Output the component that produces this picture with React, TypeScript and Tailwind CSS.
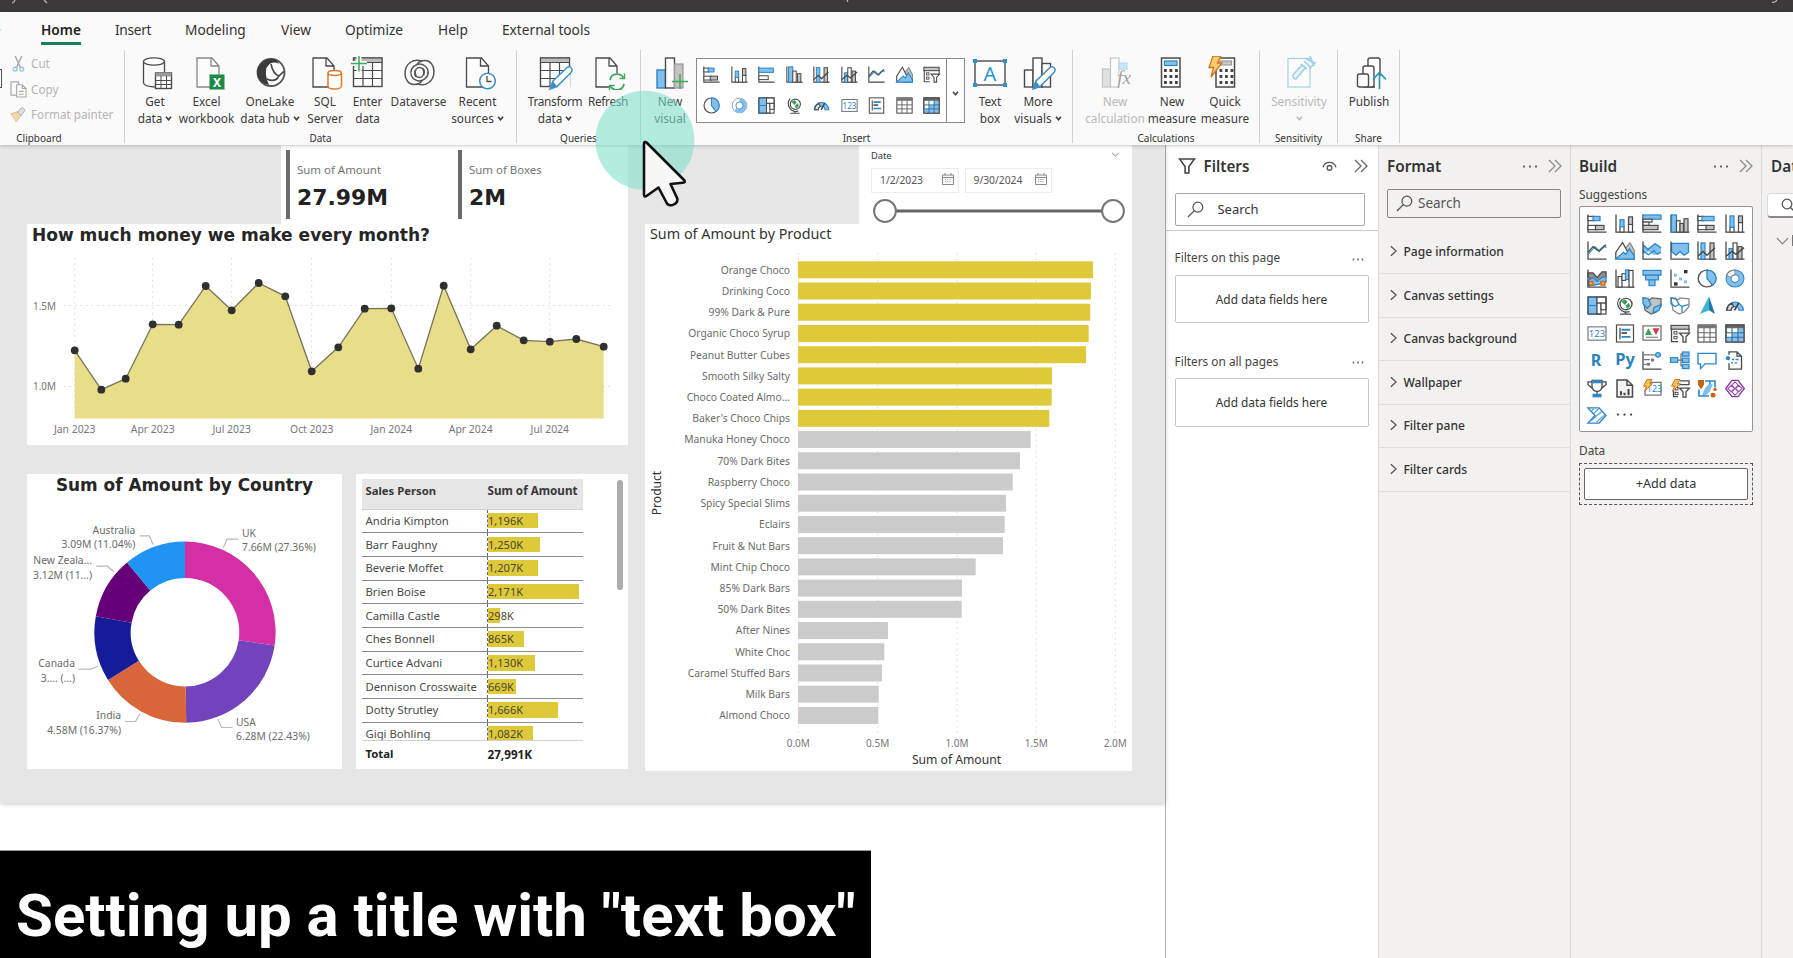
import React from "react";

const D = "#4a4a4a";
const B = "#83bfec";
const BS = "#2b86c8";
const G = "#c3c3c3";
const UI = "'Noto Sans', 'Open Sans', sans-serif";

type Kids = { children?: React.ReactNode };

/* ---------- small 20x20 visual glyphs ---------- */

const R = ({ x, y, w, h, f = "#fff", s = D, k = 1.2 }: { x: number; y: number; w: number; h: number; f?: string; s?: string; k?: number }) => (
  <rect x={x} y={y} width={w} height={h} fill={f} stroke={s} strokeWidth={k} />
);
const P = ({ d, s = D, f = "none", k = 1.3 }: { d: string; s?: string; f?: string; k?: number }) => (
  <path d={d} stroke={s} fill={f} strokeWidth={k} />
);
const Axes = () => <P d="M1 .5V19H19.5" />;
const Bolt = () => <P d="M5 .5H10L7.5 5H10.5L2.5 13L4.5 7.5H1.5Z" s="#c8641a" f="#f5c35a" k={0.9} />;
const FunnelMini = () => <P d="M9.5 9.5H19.5L16 13.5V19H13V13.5Z" f="#fff" />;

const glyphs: Record<string, React.ReactNode> = {
  stackedBar: (<><Axes /><R x={1} y={2.5} w={6} h={4.5} /><R x={6} y={2.5} w={7} h={4.5} f={B} s={BS} /><R x={1} y={12} w={9} h={4.5} /><R x={8.5} y={12} w={8.5} h={4.5} f={G} /></>),
  stackedCol: (<><Axes /><R x={5} y={13} w={4} h={6} /><R x={5} y={6} w={4} h={7.5} f={B} s={BS} /><R x={13.5} y={11} w={4} h={8} /><R x={13.5} y={3} w={4} h={8} f={G} /></>),
  clusteredBar: (<><Axes /><R x={1} y={2.5} w={17} h={5} f={B} s={BS} /><R x={1} y={11.5} w={11} h={4.5} /></>),
  clusteredCol: (<><Axes /><R x={3} y={1} w={5} h={18} f={B} s={BS} /><R x={8} y={6} w={4} h={13} /><R x={13.5} y={9} w={4} h={10} f={G} /></>),
  clusteredBar2: (<><Axes /><R x={1} y={1} w={18} h={4.5} f={B} s={BS} /><R x={1} y={5.5} w={9} h={3} /><R x={1} y={8.5} w={6} h={3.5} /><R x={1} y={12} w={15} h={4.5} f={G} /></>),
  clusteredCol2: (<><Axes /><R x={1.5} y={1} w={5} h={18} f={B} s={BS} /><R x={6.5} y={7} w={3.5} h={12} /><R x={10} y={10} w={3.5} h={9} f={G} /><R x={14} y={5} w={4} h={14} f={G} /></>),
  bar100: (<><Axes /><R x={1} y={2.5} w={6} h={4.5} /><R x={5} y={2.5} w={12} h={4.5} f={B} s={BS} /><R x={1} y={12} w={9} h={4.5} /><R x={9} y={12} w={8} h={4.5} f={G} /></>),
  col100: (<><Axes /><R x={5} y={14} w={4} h={5} /><R x={5} y={2} w={4} h={12} f={B} s={BS} /><R x={13.5} y={9} w={4} h={10} /><R x={13.5} y={2} w={4} h={7} f={G} /></>),
  comboStack: (<><Axes /><R x={4} y={2} w={4} h={17} f={B} s={BS} /><R x={13} y={2} w={4} h={17} f={G} /><P d="M1 16L6 11L10 15L18 7" k={1.5} /></>),
  comboClust: (<><Axes /><R x={4} y={8} w={4} h={11} f={B} s={BS} /><R x={8} y={2} w={4} h={17} /><R x={13} y={6} w={4} h={13} f={G} /><P d="M1 16L7 11L11 14L19 7" k={1.5} /></>),
  line: (<><Axes /><P d="M1 14L8 6L12 10L17 5L19.5 7" s="#3aa0c8" /><P d="M1 12L6 6L12 11L19 4" /></>),
  area: (<><P d="M10 8L15 2L19.3 10V19H10Z" f={G} s="#8a8a8a" /><P d="M.8 18V12L7.500 1.500L14 14V19Z" f="#fff" s={D} /><P d="M.8 19L8.500 12L11 14L14.500 8L19.300 16V19Z" f={B} s={BS} /></>),
  stackedArea: (<><P d="M1 3L6 8L13 2L19 6V12L12 15L7 11L1 14Z" f={B} s="none" /><P d="M1 4L6 9L13 3L19 7" s={BS} /><P d="M1 10.500L6.500 14.500L12 10L15 14L19 12" s={BS} /><Axes /></>),
  area100: (<><P d="M1.500 2.500H18.500V12L14 15L10 11L6 15L1.500 11Z" f={B} s={BS} /><Axes /></>),
  ribbon: (<><P d="M1 4L6 4L10 9L15 3H19V8L14 13H7L1 8Z" f="#8f8f8f" s={D} /><P d="M1 12L6 9L10 13L15 9L19 8V14L12 16L7 17L1 18Z" f={B} s={BS} /><R x={2} y={13} w={4} h={4} f="#f0a04a" s="#c8641a" /><R x={14} y={13} w={4} h={4} f="#f0a04a" s="#c8641a" /><Axes /></>),
  waterfall: (<><Axes /><R x={3} y={8} w={4} h={11} /><R x={7} y={5} w={3.5} h={7} /><R x={10.5} y={1} w={3.5} h={10} f={B} s={BS} /><R x={14} y={1.5} w={4} h={17.5} /></>),
  funnel: (<><R x={1} y={1.5} w={18} h={5} f={B} s={BS} /><R x={3.5} y={6.5} w={13} h={5} f={B} s={BS} /><R x={7} y={11.5} w={6} h={6} f={B} s={BS} /></>),
  scatter: (<><Axes /><rect x="14" y="1" width="3.5" height="3.5" fill="#333" /><rect x="4" y="5" width="3" height="3" fill={B} /><rect x="9" y="9" width="3" height="3" fill={B} /><rect x="14" y="12" width="3" height="3" fill={B} /><rect x="4" y="14" width="3.5" height="3.5" fill="#333" /></>),
  pie: (<><circle cx="10" cy="10" r="8.8" fill="#fff" stroke="#555" strokeWidth="1.4" /><P d="M10 1.2A8.8 8.8 0 0 1 15.5 17L10 10Z" f={B} s={BS} /></>),
  donut: (<><circle cx="10" cy="10" r="6.5" fill="none" stroke={BS} strokeWidth="6" /><circle cx="10" cy="10" r="6.5" fill="none" stroke={B} strokeWidth="4" /><path d="M3.700 8A6.500 6.500 0 0 1 10 3.500" fill="none" stroke="#777" strokeWidth="6" /><path d="M4 7.500A6.500 6.500 0 0 1 9.500 3.500" fill="none" stroke="#f4f4f4" strokeWidth="4" /></>),
  donutLight: (<><circle cx="10" cy="10" r="8.6" fill="#fff" stroke="#999" strokeWidth="1.1" /><path d="M10 3.5A6.5 6.5 0 1 1 5 14.5" fill="none" stroke={B} strokeWidth="4" /><circle cx="10" cy="10" r="4.2" fill="#fff" stroke={BS} strokeWidth="1" /></>),
  treemap: (<><R x={1} y={1} w={9} h={18} f={B} s={BS} /><R x={10} y={1} w={9} h={6.5} /><R x={10} y={7.5} w={4} h={11.5} /><R x={14} y={7.5} w={5} h={7} /><R x={1} y={1} w={18} h={18} f="none" /><P d="M1 10H10" s={BS} /></>),
  map: (<><circle cx="11" cy="8.5" r="6" fill="#fff" stroke="#555" strokeWidth="1.4" /><P d="M7 6L10 4L12 6L10 9Z M11 10L14 8L14.5 11L12 13Z" f="#2f9e54" s="#2f9e54" k={0.8} /><P d="M5 2A9 9 0 0 0 14.5 16.5" /><P d="M10.5 16.5V19M5 19.2H16" /></>),
  filledMap: (<><P d="M1 2L8 4L10 2L19 3V11L14 17L9 19L3 15Z" f={G} s="#666" /><P d="M1 2L6 2.5L9 9L5 13L1 8Z" f={B} s={BS} /><P d="M12 12L19 9L17 15L11 18Z" f={B} s={BS} /></>),
  shapeMap: (<><P d="M1 2L8 4L10 2L19 3V11L14 17L9 19L3 15Z" f="#fff" s="#888" /><P d="M1 2L6 2.5L9 9L5 11L1 8Z" s={BS} /><P d="M12 11L18.5 9M12 11L12 17M9 9L12 11" s={BS} /></>),
  azure: (<><path d="M12 .5L3 19L12 15Z" fill="#3fb4d4" /><path d="M12 .5L18 19L12 15Z" fill="#2577ab" /></>),
  gauge: (<><path d="M1.5 15A8.5 8.5 0 0 1 18.5 15H14A4 4 0 0 0 6 15Z" fill={B} stroke={BS} strokeWidth="1.2" /><P d="M2 15A8.5 8.5 0 0 1 7 7.5L8.5 11.3A4 4 0 0 0 6 15Z" f="#ddd" /><P d="M9.5 15L14 7" k={1.8} /></>),
  card: (<><R x={1} y={3} w={18} h={14} s="#777" /><text x="10" y="13.8" fontSize="9.5" textAnchor="middle" fill={BS} fontFamily={UI}>123</text></>),
  multiCard: (<><R x={1.5} y={1} w={17} h={18} /><path d="M5 4V16" stroke={D} strokeWidth="1.3" /><path d="M6.5 6H15M6.5 13.5H15.5" stroke={BS} strokeWidth="2" /><path d="M6.5 9.5H12" stroke="#444" strokeWidth="1.8" /></>),
  kpi: (<><R x={1} y={2} w={18} h={15} s="#666" /><path d="M3 11.500L6.500 4.500L10 11.500Z" fill="#3aa655" /><path d="M10.500 4.500H17.500L14 11.500Z" fill="#d23a4a" /><P d="M4 14H16" s="#888" /></>),
  slicer: (<><R x={1} y={1.5} w={18} h={4} f={G} /><P d="M1.5 5V18.5H8M19 5V9" /><R x={4} y={8} w={3} h={2.5} k={1} /><R x={4} y={13} w={3} h={2.5} k={1} /><FunnelMini /></>),
  table: (<><R x={1} y={1} w={18} h={18} /><rect x="1" y="1" width="18" height="3.5" fill="#777" /><P d="M7 4V19M13 4V19M1 9.3H19M1 14H19" k={1.1} s="#666" /></>),
  matrix: (<><R x={1} y={1} w={18} h={18} /><rect x="7" y="9.5" width="12" height="9" fill={B} /><rect x="13" y="4.5" width="6" height="6" fill={B} /><rect x="1" y="1" width="18" height="3.5" fill="#666" /><rect x="1" y="14" width="7" height="5" fill={B} /><P d="M7 4V19M13 4V19M1 9.3H19M1 14H19" k={1.1} s="#2f6f9f" /><R x={1} y={1} w={18} h={18} f="none" /></>),
  r: <text x="9" y="16" fontSize="16" fontWeight="700" textAnchor="middle" fill="#2b83b8" fontFamily={UI}>R</text>,
  py: <text x="10" y="15" fontSize="16.500" fontWeight="700" textAnchor="middle" fill="#2b83b8" fontFamily={UI}>Py</text>,
  keyInf: (<><Axes /><P d="M1 4H14M1 9H8M1 14H6" s="#777" /><circle cx="16" cy="4" r="2.4" fill={B} stroke={BS} strokeWidth="1.2" /><rect x="9" y="8" width="3" height="3" fill="#777" /><rect x="5" y="12.5" width="3" height="3" fill="#777" /></>),
  decomp: (<><P d="M7 9.5H11M11 3V16M11 3H13M11 9.5H13M11 16H13" s="#777" /><R x={0.6} y={7} w={7} h={5} f={B} s={BS} /><R x={12.5} y={1} w={6.5} h={4.5} f={B} s={BS} /><R x={12.5} y={7.5} w={6.5} h={4.5} f={B} s={BS} /><R x={12.5} y={14} w={6.5} h={4.5} f={B} s={BS} /></>),
  qa: <P d="M1 2.5H19V13.5H8L3.5 18.5V13.5H1Z" s={BS} f="#fff" k={1.4} />,
  narrative: (<><P d="M4 4V1H12L16.5 5.5V19H4V13M12 1V5.5H16.5" /><circle cx="3" cy="7.5" r="2.2" fill={BS} /><P d="M7 9H9M10.5 9H13.5M6 12.5H8M9.5 12.5H12" s={BS} k={1.5} /></>),
  goals: (<><P d="M5 1.5H15V8A5 5 0 0 1 5 8ZM5 3H1V6L5 9.5M15 3H19V6L15 9.5M10 13V16" f="none" /><rect x="5.5" y="1" width="9" height="3.5" fill={BS} /><rect x="5.5" y="15.5" width="9" height="3.8" fill={BS} /></>),
  paginated: (<><P d="M2 1H12L17.5 6.5V19H2ZM12 1V6.5H17.5" f="#f2f2f2" k={1.5} /><path d="M6 17V13M9.5 17V14.5M13.5 17V10.5" stroke="#444" strokeWidth="2" /></>),
  boltCard: (<><P d="M8 3.5H19V17H3V12" s="#777" /><text x="12.5" y="14" fontSize="9" textAnchor="middle" fill={BS} fontFamily={UI}>123</text><Bolt /></>),
  boltSlicer: (<><P d="M10 2H19V6H9M3.5 12V18.5H8" /><R x={5} y={9} w={3} h={2.5} k={1} /><R x={5} y={14} w={3} h={2.5} k={1} /><FunnelMini /><Bolt /></>),
  arcgis: (<><P d="M8 2H18V9M2 11V18H12M13 2V6L9 10V14L6 18" s={BS} f="none" k={1.6} /><path d="M8 10L12 5H16L13 13L9 17H5Z" fill={B} /><path d="M1 1H7V6L4 11L1 6Z" fill="#c8641a" /><circle cx="18" cy="11" r="1.7" fill="#c8641a" /><circle cx="16" cy="17" r="2.5" fill="#c8641a" /></>),
  powerApps: (<><P d="M7 1.500H13L19.300 10L13 18.500H7L.7 10Z" s="#8a3a9e" f="#fff" k={1.4} /><P d="M10 3L13.2 6.5L10 10L6.8 6.5ZM6.2 6.6L9.4 10L6.2 13.4L3 10ZM13.8 6.6L17 10L13.8 13.4L10.6 10ZM10 10L13.2 13.5L10 17L6.8 13.5Z" s="#a04ab4" k={1.1} /></>),
  automate: (<><P d="M1 2H12L19 10L12 18H1L8 10Z" s={BS} k={1.4} f="#fff" /><P d="M4.5 5.5L7 2.500M6.500 8L12 2.500M3.500 16L15 5.500M9.500 17L18 9" s="#4aa3dc" k={1.2} /></>),
  more: (<><circle cx="3" cy="9" r="1.2" fill="#444" /><circle cx="9.5" cy="9" r="1.2" fill="#444" /><circle cx="16" cy="9" r="1.2" fill="#444" /></>),
};

const Glyph = ({ name, big }: { name: string; big?: boolean }) => (
  <svg viewBox="0 0 20 20" preserveAspectRatio="none" className={big ? "h-[19px] w-[20px] overflow-visible" : "h-[17px] w-[17px] overflow-visible"}>
    {glyphs[name]}
  </svg>
);

/* ---------- ribbon icons (36 x 34) ---------- */

const Doc = ({ x = 6, s = D, w = 22 }: { x?: number; s?: string; w?: number }) => (
  <path d={`M${x} 2H${x + w - 7}L${x + w} 10V31H${x}ZM${x + w - 8} 2V10H${x + w}`} fill="#fcfcfc" stroke={s} strokeWidth="1.3" />
);
const Pencil = () => (
  <>
    <path d="M13 33L16 25L30 11.5Q33 9.500 35 13Q35.500 15 33.500 17L20 30.500Z" fill="#fff" stroke="#3a8fc9" strokeWidth="1.500" />
    <path d="M13 33L16 25L20 30.500Z" fill="#3a8fc9" />
  </>
);
const CalcKeys = ({ x }: { x: number }) => (
  <>
    {[13, 19, 25].map((y) =>
      [0, 5.5, 11].map((dx) => <rect key={`${dx}-${y}`} x={x + dx} y={y} width="2.800" height="3" fill="#444" />)
    )}
  </>
);

const big: Record<string, React.ReactNode> = {
  getData: (<><path d="M6.500 5.500V27Q7 30.500 18 31M27.500 5.500V16" fill="none" stroke={D} strokeWidth="1.300" /><ellipse cx="17" cy="5.500" rx="10.500" ry="3.600" fill="#fff" stroke={D} strokeWidth="1.300" /><R x={18.5} y={17} w={16} h={15.5} k={1.4} /><rect x="18.500" y="17" width="16" height="3.500" fill="#9a9a9a" /><P d="M24 20V32M29.500 20V32M18.500 24.500H34.500M18.500 28.500H34.500" k={1} /></>),
  excel: (<><Doc x={8} s="#888" /><rect x="20.500" y="18.500" width="15" height="15" fill="#1e8a44" /><text x="28" y="30.500" fontSize="12" fontWeight="700" textAnchor="middle" fill="#fff" fontFamily={UI}>X</text></>),
  onelake: (<><circle cx="19" cy="16.500" r="13.500" fill="#fff" stroke="#555" strokeWidth="1.800" /><path d="M12 5Q17 .5 24.500 4L27 8Q20 4 15 11Q12 18 17 29Q6 27 5 17Q5 10 12 5Z" fill="#3c3c3c" /><path d="M15 12Q18 21 24 24" fill="none" stroke="#fff" strokeWidth="1.500" /><path d="M19 8Q21 18 27 20Q31 16 32 15.500M15 23Q23 27 27 20" fill="none" stroke="#444" strokeWidth="1.600" /></>),
  sql: (<><Doc x={6} w={21} /><path d="M21 17V30Q21 33 27.500 33T34.500 30V17" fill="#fff" stroke="#dc7a2e" strokeWidth="1.500" /><ellipse cx="27.700" cy="17" rx="6.700" ry="2.400" fill="#fff" stroke="#dc7a2e" strokeWidth="1.500" /></>),
  enter: (<><R x={3.5} y={2} w={28.5} h={28.5} k={1.4} /><rect x="4" y="2" width="28" height="4.500" fill="#bbb" stroke={D} /><P d="M13 6V30M22.500 6V30M4 14.500H32M4 22.500H32" k={1.2} /><path d="M9 0V15.500M1 7.500H17" stroke="#fafafa" strokeWidth="5" /><path d="M9 0V15.500M1 7.500H17" stroke="#3fa85c" strokeWidth="1.500" /></>),
  dataverse: (
    <g fill="none" stroke="#555" strokeWidth="1.500">
      <path d="M21 5.500C13 1.500 4 7.500 4 17.500C4 24 8 28.500 13 28.500C18 28.500 20 26.500 21 24.500" />
      <path d="M16 27.500C24 31.500 33 25.500 33 15.500C33 9 29 4.500 24 4.500C19 4.500 17 6.500 16 8.500" />
      <path d="M16 8.500C11 10.500 8.500 15 10.500 20C12 23.500 17 26 21 24.500C26 22.500 28.500 18 26.500 13C25 9.500 20 7 16 8.500Z" />
      <ellipse cx="18.500" cy="16.500" rx="4.300" ry="5" />
      <path d="M14.500 14C13 17 14 20 15.500 21M22.500 19C24 16 23 13 21.500 12" />
    </g>
  ),
  recent: (<><Doc x={6.5} w={22} /><circle cx="27.500" cy="25" r="7.800" fill="#fff" stroke="#3a8fc9" strokeWidth="1.500" /><P d="M27 20V25.500H31.500" /></>),
  transform: (<><R x={3.5} y={2} w={29} h={28.5} k={1.4} /><rect x="3.500" y="2" width="29" height="4.500" fill="#bbb" stroke={D} /><P d="M13 6V30M22.500 6V30M4 14.500H32M4 22.500H32" k={1.2} /><path d="M15 33L33 16V34H15Z" fill="#fafafa" /><Pencil /></>),
  refresh: (<><Doc x={6} w={21} /><circle cx="27" cy="26" r="9" fill="#fafafa" /><path d="M20 24A7.200 7.200 0 0 1 33.500 22M34 28A7.200 7.200 0 0 1 20.500 30" fill="none" stroke="#3fa85c" strokeWidth="1.700" /><path d="M34.500 17.500V22.500H29.500M19.500 34V29.500H24.500" fill="none" stroke="#3fa85c" strokeWidth="1.500" /></>),
  newVisual: (<><R x={5} y={14} w={8.5} h={18} f={B} s={BS} k={1.4} /><R x={13.5} y={2} w={9} h={30} k={1.4} /><R x={22.5} y={8} w={8.5} h={24} f={G} s="#999" /><path d="M28 18V33M20 25.500H36" stroke="#3fa85c" strokeWidth="1.500" /></>),
  textBox: (<><R x={3} y={5} w={30} h={24} k={1.4} /><text x="18" y="24.500" fontSize="20" textAnchor="middle" fill="#2b93d1" fontFamily={UI}>A</text>{[[1, 3], [31, 3], [1, 27], [31, 27]].map(([x, y]) => <rect key={`${x}${y}`} x={x} y={y} width="4" height="4" fill="#2b93d1" />)}</>),
  moreVisuals: (<><R x={4.5} y={14} w={8.5} h={17} k={1.4} /><R x={13} y={2} w={9} h={29} k={1.4} /><R x={22} y={7.5} w={8.5} h={23.5} k={1.4} /><Pencil /></>),
  newCalc: (<g opacity=".55"><R x={5.5} y={13} w={8} h={18} f="#ccc" s="#999" /><R x={13.5} y={2} w={8.5} h={29} s="#999" /><R x={22} y={7} w={8} h={6} f="#a6d6f2" s="#7fc0e6" /><path d="M22.700 14H36V34H20Z" fill="#fafafa" /><text x="27" y="28" fontSize="19" fontStyle="italic" textAnchor="middle" fill="#555" fontFamily="'Liberation Serif', serif">fx</text></g>),
  newMeasure: (<><R x={7.5} y={2} w={18.5} h={29} k={1.5} /><R x={10.5} y={5} w={12.5} h={4.5} f={B} s={BS} /><CalcKeys x={10} /></>),
  quick: (<><R x={9} y={2} w={18.5} h={29} k={1.5} /><R x={12} y={5} w={12.5} h={4} f="#ccc" s="#999" /><CalcKeys x={12.5} /><path d="M6 0H14L10.500 7H15L4 21L6.500 11.500H2Z" fill="#f7cd6b" stroke="#d0741f" strokeWidth="1.300" /></>),
  sensitivity: (<g opacity=".45"><R x={7} y={2.5} w={22} h={28.5} s="#3a9fd0" /><path d="M12 19L20 10Q23 9 24 12L15 23Q12 23 12 19ZM20 8L26 13M23 5L30 12M25 3L34 7L28 13M29 0L33 10" fill="#d5ecf8" stroke="#3a9fd0" strokeWidth="1.700" /></g>),
  publish: (<><rect x="17" y="2" width="12" height="29" rx="2" fill="#fff" stroke={D} strokeWidth="1.400" /><rect x="12" y="10" width="11" height="21" rx="2" fill="#fff" stroke={D} strokeWidth="1.400" /><rect x="6.500" y="18" width="11" height="13" rx="2" fill="#fff" stroke={D} strokeWidth="1.400" /><path d="M24 20H34V34H24Z" fill="#fafafa" /><path d="M28.500 33V17M22 23.500L28.500 16.500L35 23.500" fill="none" stroke="#2f93b5" strokeWidth="1.700" /></>),
};

const Caret = ({ className = "" }: { className?: string }) => (
  <svg viewBox="0 0 8 6" className={`h-[5px] w-[7px] ${className}`}><path d="M1 1L4 4.500L7 1" fill="none" stroke="currentColor" strokeWidth="1.900" /></svg>
);

const Btn = ({ icon, a, b, caret, w, off, tight }: { icon: string; a: string; b?: string; caret?: boolean; w: string; off?: boolean; tight?: boolean }) => (
  <div className={`flex shrink-0 flex-col items-center whitespace-nowrap text-[11.8px] leading-[17px] ${w} ${off ? "text-[#b9b9b9]" : "text-[#3b3b3b]"}`}>
    <svg viewBox="0 0 36 34" className="mb-[3px] h-[34px] w-[36px] shrink-0">{big[icon]}</svg>
    <div className={tight ? "tracking-[-0.3px]" : ""}>{a}</div>
    <div className="flex h-[17px] items-center gap-[3px]">{b}{caret && <Caret />}</div>
  </div>
);

const Group = ({ label, w, className = "", labelClass = "", children }: Kids & { label: string; w: string; className?: string; labelClass?: string }) => (
  <div className={`flex h-[93px] shrink-0 flex-col border-r border-[#d0d0d0] ${w}`}>
    <div className={`flex h-[81px] shrink-0 pt-[6px] ${className}`}>{children}</div>
    <div className={`shrink-0 text-center text-[10px] leading-[15px] text-[#333] ${labelClass}`}>{label}</div>
  </div>
);

const tabs: [string, string][] = [["Insert", "w-[70px] tracking-[-0.3px]"], ["Modeling", "w-[96px]"], ["View", "w-[64px]"], ["Optimize", "w-[93px]"], ["Help", "w-[64px]"], ["External tools", "w-[100px]"]];

const galleryA = ["stackedBar", "stackedCol", "clusteredBar", "clusteredCol", "comboStack", "comboClust", "line", "area", "slicer"];
const galleryB = ["pie", "donutLight", "treemap", "map", "gauge", "card", "multiCard", "table", "matrix"];

function Ribbon() {
  return (
    <div className="relative z-10 flex h-[133px] shrink-0 flex-col bg-[#fafafa] shadow-[0_1px_3px_rgba(0,0,0,0.22)]">
      <div className="flex h-[38px] items-start pt-[8px] text-[13.700px] leading-[19px] text-[#333]">
        <div className="w-[41px]"><span className="-ml-[7px] text-[#4a7f9a]">e</span></div>
        <div className="w-[74px]"><div className="w-[40px] border-b-[3px] border-[#1a7f5e] pb-[3px] font-semibold text-[#222]">Home</div></div>
        {tabs.map(([t, w]) => <div key={t} className={`whitespace-nowrap ${w}`}>{t}</div>)}
      </div>
      <div className="flex">
        <Group label="Clipboard" w="w-[125px]" labelClass="pr-[46px]">
          <div className="mt-[13px] h-[19px] w-[2px] shrink-0 border-y border-r border-[#555]" />
          <div className="flex flex-col gap-[8.500px] whitespace-nowrap pl-[8px] text-[11.700px] leading-[17px] text-[#b5b5b5]">
            <div className="-mt-px flex items-center gap-[5px]">
              <svg viewBox="0 0 16 18" className="h-[17px] w-[16px]"><path d="M5 1L10.500 13M12 1L6.500 13" stroke="#aaa" strokeWidth="1.600" /><circle cx="5" cy="15" r="2" fill="none" stroke="#9ac6dc" strokeWidth="1.400" /><circle cx="12" cy="15" r="2" fill="none" stroke="#9ac6dc" strokeWidth="1.400" /></svg>Cut
            </div>
            <div className="flex items-center gap-[5px]">
              <svg viewBox="0 0 18 18" className="h-[17px] w-[17px]"><path d="M7 15H1V1H9V4" fill="none" stroke="#aaa" strokeWidth="1.300" /><path d="M7 4H13L17 8V17H7ZM13 4V8H17M9.500 11H14.500M9.500 14H14.500" fill="none" stroke="#aaa" strokeWidth="1.200" /></svg><span className="-ml-px">Copy</span>
            </div>
            <div className="flex items-center gap-[5px]">
              <svg viewBox="0 0 18 18" className="h-[17px] w-[16px]"><path d="M1 8L9 6L12 11L7 17Z" fill="#f3d9ac" stroke="#e2bd83" /><path d="M8 6L14 1L17 4L12.500 10.500Z" fill="#ddd" stroke="#aaa" /></svg>Format painter
            </div>
          </div>
        </Group>
        <Group label="Data" w="w-[392px]" className="pl-[5px]">
          <Btn icon="getData" a="Get" b="data" caret w="w-[50px]" />
          <Btn icon="excel" a="Excel" b="workbook" w="w-[53px]" />
          <Btn icon="onelake" a="OneLake" b="data hub" caret w="w-[74px]" />
          <Btn icon="sql" a="SQL" b="Server" w="w-[36px]" />
          <Btn icon="enter" a="Enter" b="data" w="w-[49px]" />
          <Btn icon="dataverse" a="Dataverse" w="w-[53px]" />
          <Btn icon="recent" a="Recent" b="sources" caret w="w-[65px]" />
        </Group>
        <Group label="Queries" w="w-[124px]" className="pl-[5px]">
          <Btn icon="transform" a="Transform" b="data" caret tight w="w-[66px]" />
          <Btn icon="refresh" a="Refresh" w="w-[40px]" tight />
        </Group>
        <Group label="Insert" w="w-[432px]" className="pl-[8px]">
          <Btn icon="newVisual" a="New" b="visual" w="w-[42px]" />
          <div className="ml-[5px] mr-[4px] mt-[2px] flex h-[65px] w-[269px] shrink-0 border border-[#8a8a8a] bg-white">
            <div className="flex w-[250px] flex-col gap-[14px] border-r border-[#8a8a8a] pl-[6px] pt-[7px]">
              {[galleryA, galleryB].map((row, i) => (
                <div key={i} className="flex h-[17px] gap-[10.550px]">{row.map((n) => <Glyph key={n} name={n} />)}</div>
              ))}
            </div>
            <div className="flex flex-1 items-center justify-center pt-[6px] text-[#444]"><Caret /></div>
          </div>
          <Btn icon="textBox" a="Text" b="box" w="w-[42px]" />
          <Btn icon="moreVisuals" a="More" b="visuals" caret w="w-[54px]" />
        </Group>
        <Group label="Calculations" w="w-[187px]" className="pl-[12px]">
          <Btn icon="newCalc" a="New" b="calculation" off w="w-[60px]" />
          <Btn icon="newMeasure" a="New" b="measure" w="w-[54px]" />
          <Btn icon="quick" a="Quick" b="measure" w="w-[52px]" />
        </Group>
        <Group label="Sensitivity" w="w-[78px]"><Btn icon="sensitivity" a="Sensitivity" caret off w="w-[78px]" /></Group>
        <Group label="Share" w="w-[62px]"><Btn icon="publish" a="Publish" w="w-[62px]" /></Group>
      </div>
    </div>
  );
}

/* ---------- report page ---------- */

const pts: [number, number][] = [[74.7, 350.3], [101.3, 389.7], [125.7, 378.7], [152.7, 324.3], [178.7, 324.7], [205.7, 286], [231.7, 310.3], [258.7, 283], [285.3, 296.3], [311.7, 371.3], [338.3, 347.3], [364.7, 308.7], [391.3, 308.3], [418.3, 368.7], [443.7, 285.7], [470.7, 349.3], [496.7, 325.7], [523.7, 340.3], [549.8, 341.7], [576.3, 339], [603.7, 346.7]];
const months: [string, number][] = [["Jan 2023", 0], ["Apr 2023", 3], ["Jul 2023", 6], ["Oct 2023", 9], ["Jan 2024", 12], ["Apr 2024", 15], ["Jul 2024", 18]];
const lineStr = pts.map((p) => p.join(",")).join(" ");

function AreaChart() {
  return (
    <svg viewBox="27 224 601 221" className="block h-[221px] w-[601px] bg-white" fontFamily={UI}>
      <text x="32" y="241" fontSize="17.050" fontWeight="700" fill="#262626" fontFamily="'DejaVu Sans', sans-serif">How much money we make every month?</text>
      <g stroke="#d8d8d8" strokeWidth="1" strokeDasharray="1.500 4">
        <path d="M64 305.500H614M64 386.500H614" />
        {months.map(([m, i]) => <path key={m} d={`M${pts[i][0]} 258V418`} />)}
      </g>
      <polygon points={`74.700,418.500 ${lineStr} 603.700,418.500`} fill="#e8dd89" />
      <polyline points={lineStr} fill="none" stroke="#77735c" strokeWidth="1.300" />
      {pts.map(([x, y]) => <circle key={x} cx={x} cy={y} r="3.900" fill="#303030" />)}
      <g fontSize="10.400" fill="#777">
        <text x="33" y="309.500" fontSize="9.900">1.5M</text>
        <text x="33" y="390" fontSize="9.900">1.0M</text>
        {months.map(([m, i]) => <text key={m} x={pts[i][0]} y="432.500" textAnchor="middle">{m}</text>)}
      </g>
    </svg>
  );
}

const slices: [number, string][] = [[27.36, "#d42fa5"], [22.43, "#7243bd"], [16.37, "#d9653b"], [11.65, "#151c9a"], [11.15, "#650078"], [11.04, "#2093f5"]];
const donutLabels: [string, string, number, number, boolean][] = [
  ["Australia", "3.09M (11.04%)", 135.3, 533.3, true],
  ["UK", "7.66M (27.36%)", 242, 536.3, false],
  ["New Zeala...", "3.12M (11...)", 92, 563.8, true],
  ["Canada", "3.... (...)", 75, 666.5, true],
  ["India", "4.58M (16.37%)", 121, 718.5, true],
  ["USA", "6.28M (22.43%)", 236, 725, false],
];

function DonutChart() {
  const cx = 185, cy = 631.7, ro = 90.6, ri = 54.3;
  let a = 0;
  const arcs = slices.map(([v, c]) => {
    const s = (a / 100) * 2 * Math.PI;
    a += v;
    const e = (a / 100) * 2 * Math.PI;
    const p = (r: number, t: number) => `${(cx + r * Math.sin(t)).toFixed(2)} ${(cy - r * Math.cos(t)).toFixed(2)}`;
    return <path key={c} fill={c} d={`M${p(ro, s)}A${ro} ${ro} 0 0 1 ${p(ro, e)}L${p(ri, e)}A${ri} ${ri} 0 0 0 ${p(ri, s)}Z`} />;
  });
  return (
    <svg viewBox="27 473.5 315 295" className="block h-[295px] w-[315px] bg-white" fontFamily={UI}>
      <text x="184.500" y="490.500" fontSize="16.900" fontWeight="700" fill="#262626" textAnchor="middle" fontFamily="'DejaVu Sans', sans-serif">Sum of Amount by Country</text>
      {arcs}
      <path fill="none" stroke="#b8b8b8" strokeWidth="1.200" d="M139.600 535.300H149.400L153 544M238.400 538.700H227L223.300 547.300M96.300 565.700H107.300L113.900 571.300M78.400 668.700H90.600L98 665.700M125 721H135.500L140 713.300M232.700 727H221.600L218 718.700" />
      <g fontSize="10.350" fill="#6b6b6b">
        {donutLabels.map(([n, v, x, y, end]) => (
          <g key={n} textAnchor={end ? "end" : "start"}>
            <text x={x} y={y}>{n}</text>
            <text x={x} y={y + 14.5}>{v}</text>
          </g>
        ))}
      </g>
    </svg>
  );
}

const people: [string, string, number][] = [["Andria Kimpton", "1,196K", 49.5], ["Barr Faughny", "1,250K", 52], ["Beverie Moffet", "1,207K", 50.4], ["Brien Boise", "2,171K", 90.8], ["Camilla Castle", "298K", 12.3], ["Ches Bonnell", "865K", 36], ["Curtice Advani", "1,130K", 47], ["Dennison Crosswaite", "669K", 27.7], ["Dotty Strutley", "1,666K", 69.6], ["Gigi Bohling", "1,082K", 45]];

function SalesTable() {
  return (
    <div className="flex w-[272.500px] justify-between bg-white pl-[6px] pr-[5.500px] pt-[5px]">
      <div className="flex w-[221px] flex-col text-[11.300px] leading-[16px] text-[#4a4a4a]">
        <div className="flex h-[31px] shrink-0 border-b border-[#d0d0d0] bg-[#e6e6e6] pl-[4px] pt-[4.500px] font-bold text-[#383838]">
          <div className="w-[122px]">Sales Person</div>
          <div className="whitespace-nowrap text-[11.650px]">Sum of Amount</div>
        </div>
        <div className="h-[231.500px] shrink-0 overflow-hidden border-b border-[#d0d0d0]">
          {people.map(([n, v, w]) => (
            <div key={n} className="flex h-[23.700px] border-b border-[#8c8c8c] pl-[4px]">
              <div className="w-[121.500px] whitespace-nowrap pt-[3.400px]">{n}</div>
              <div className="flex flex-1 border-l border-dashed border-[#666] pt-[3.400px]">
                <div className="h-[15.500px] whitespace-nowrap bg-[#dec93b] text-[11.050px] text-[#4a472f]" style={{ width: w }}>{v}</div>
              </div>
            </div>
          ))}
        </div>
        <div className="flex pl-[4px] pt-[4.500px] font-bold text-[#222]">
          <div className="w-[122px]">Total</div>
          <div className="text-[11.700px]">27,991K</div>
        </div>
      </div>
      <div className="mt-[1px] h-[110px] w-[6px] rounded-full bg-[#adabab]" />
    </div>
  );
}

const products: [string, number][] = [["Orange Choco", 295], ["Drinking Coco", 293], ["99% Dark & Pure", 292.3], ["Organic Choco Syrup", 290.7], ["Peanut Butter Cubes", 288], ["Smooth Silky Salty", 254], ["Choco Coated Almo...", 253.7], ["Baker's Choco Chips", 251.3], ["Manuka Honey Choco", 232.7], ["70% Dark Bites", 222], ["Raspberry Choco", 214.7], ["Spicy Special Slims", 208], ["Eclairs", 206.7], ["Fruit & Nut Bars", 205], ["Mint Chip Choco", 177.7], ["85% Dark Bars", 164], ["50% Dark Bites", 163.7], ["After Nines", 90], ["White Choc", 86.3], ["Caramel Stuffed Bars", 84], ["Milk Bars", 80.7], ["Almond Choco", 80.3]];
const ticks: [string, number][] = [["0.0M", 798.3], ["0.5M", 877.7], ["1.0M", 957], ["1.5M", 1036.3], ["2.0M", 1115.3]];

function BarChart() {
  return (
    <svg viewBox="645 224 487 547" className="block h-[547px] w-[487px] bg-white" fontFamily={UI}>
      <text x="650" y="239" fontSize="14.350" fill="#333">Sum of Amount by Product</text>
      <g stroke="#d8d8d8" strokeDasharray="1.500 4">{ticks.map(([t, x]) => <path key={t} d={`M${x} 253V734`} />)}</g>
      {products.map(([n, w], i) => (
        <g key={n}>
          <rect x="798" y={261.3 + i * 21.22} width={w} height="17" fill={i < 8 ? "#dec93b" : "#cbcbcb"} />
          <text x="790" y={273.7 + i * 21.22} fontSize="10.300" textAnchor="end" fill="#6b6b6b">{n}</text>
        </g>
      ))}
      <g fontSize="10" fill="#777" textAnchor="middle">{ticks.map(([t, x]) => <text key={t} x={x} y="746.700">{t}</text>)}</g>
      <text x="956.500" y="763.500" fontSize="12.150" textAnchor="middle" fill="#333">Sum of Amount</text>
      <text transform="translate(661 493) rotate(-90)" fontSize="12.100" textAnchor="middle" fill="#333">Product</text>
    </svg>
  );
}

const CardStat = ({ label, value, w }: { label: string; value: string; w: string }) => (
  <div className={`flex gap-[7.500px] ${w}`}>
    <div className="mt-[4.500px] h-[69px] w-[4px] bg-[#6b6b6b]" />
    <div className="flex flex-col pt-[16px]">
      <div className="whitespace-nowrap text-[11.450px] leading-[18px] text-[#757575]">{label}</div>
      <div className="mt-[6px] font-['DejaVu_Sans',sans-serif] text-[21.900px] font-bold leading-[26px] text-[#222]">{value}</div>
    </div>
  </div>
);

const DateBox = ({ v }: { v: string }) => (
  <div className="flex h-[25px] w-[87.500px] items-center justify-between border border-[#ececec] pl-[8px] pr-[4px] pt-px text-[10.300px] text-[#555]">
    {v}
    <svg viewBox="0 0 12 12" className="h-[12px] w-[12px] -translate-y-[2px]"><path d="M.5 2H11.500V11.500H.5ZM.5 4.500H11.500M3 0V2.500M9 0V2.500" fill="none" stroke="#888" /><path d="M3 6.500H9.500M3 8.700H9.500" stroke="#aaa" strokeDasharray="1.200 1" strokeWidth="1.200" /></svg>
  </div>
);

function Report() {
  return (
    <div className="relative flex w-[1165px] shrink-0 flex-col bg-white">
      <div className="flex h-[658px] shrink-0 bg-[#e6e6e6] pl-[27px] shadow-[0_1px_5px_rgba(0,0,0,0.22)]">
        <div className="flex w-[601px] flex-col">
          <div className="ml-[254px] flex h-[79px] bg-white pl-[4.500px]">
            <CardStat label="Sum of Amount" value="27.99M" w="w-[172px]" />
            <CardStat label="Sum of Boxes" value="2M" w="w-[100px]" />
          </div>
          <AreaChart />
          <div className="mt-[28.500px] flex h-[295px] justify-between">
            <DonutChart />
            <SalesTable />
          </div>
        </div>
        <div className="ml-[17px] flex w-[487px] flex-col">
          <div className="flex h-[79px] w-[273px] flex-col self-end bg-white pl-[12px] pt-[3px]">
            <div className="flex h-[16px] items-center justify-between pr-[12px] text-[9.300px] text-[#333]">
              Date
              <svg viewBox="0 0 10 6" className="-mt-[3px] h-[5px] w-[9px]"><path d="M1 1L5 5L9 1" fill="none" stroke="#666" /></svg>
            </div>
            <div className="mt-[4px] flex gap-[6px]"><DateBox v="1/2/2023" /><DateBox v="9/30/2024" /></div>
            <svg viewBox="871 198 255 26" className="mt-[5px] h-[26px] w-[255px] shrink-0">
              <path d="M885 211H1113" stroke="#666" strokeWidth="2.800" />
              <circle cx="885" cy="211" r="10.900" fill="#fff" stroke="#777" strokeWidth="2" />
              <circle cx="1113" cy="211" r="10.900" fill="#fff" stroke="#777" strokeWidth="2" />
            </svg>
          </div>
          <BarChart />
        </div>
      </div>
      <div className="absolute left-0 top-[706px] flex h-[107px] w-[871px] items-center overflow-hidden bg-black pl-[16px] shadow-[0_-1px_0_#999]">
        <div className="whitespace-nowrap pt-[22px] font-['Roboto',sans-serif] text-[59.950px] font-bold leading-[70px] text-white">Setting up a title with "text box"</div>
      </div>
    </div>
  );
}

/* ---------- side panes ---------- */

const Chevs = ({ c = "#666" }: { c?: string }) => (
  <svg viewBox="0 0 14 14" className="h-[14px] w-[14px]"><path d="M1 1L7 7L1 13M7 1L13 7L7 13" fill="none" stroke={c} strokeWidth="1.300" /></svg>
);
const Dots = ({ className = "" }: { className?: string }) => (
  <svg viewBox="0 0 16 3" className={`h-[3px] w-[16px] ${className}`}><path d="M1 .5H3V2.500H1ZM7 .5H9V2.500H7ZM13 .5H15V2.500H13Z" fill="#666" /></svg>
);
const Lens = () => (
  <svg viewBox="0 0 18 18" className="h-[17px] w-[17px]"><circle cx="11.500" cy="6.500" r="5.200" fill="none" stroke="#555" strokeWidth="1.300" /><path d="M7.800 10.200L1 17" stroke="#555" strokeWidth="1.400" /></svg>
);

function FiltersPane() {
  return (
    <div className="flex w-[213px] shrink-0 flex-col border-l border-[#b5b3b1] bg-white text-[#333]">
      <div className="flex h-[85.500px] flex-col border-b border-[#c8c8c8] pl-[8.500px]">
        <div className="flex h-[42px] items-center pl-[3px] text-[15.200px] font-semibold">
          <svg viewBox="0 0 18 17" className="h-[16px] w-[18px]"><path d="M1 1H17L11 9V16H7V9Z" fill="none" stroke="#444" strokeWidth="1.700" /></svg>
          <span className="ml-[8px] w-[118px]">Filters</span>
          <svg viewBox="0 0 16 12" className="mr-[17px] h-[11px] w-[15px]"><path d="M1 7Q2 1.500 8 1.500T15 7" fill="none" stroke="#555" strokeWidth="1.400" /><circle cx="8" cy="7.500" r="2.600" fill="none" stroke="#555" strokeWidth="1.400" /></svg>
          <Chevs />
        </div>
        <div className="mt-[6px] flex h-[33px] w-[190px] items-center gap-[14px] rounded-[2px] border border-[#a8a8a8] pl-[11px] text-[12.950px]"><Lens />Search</div>
      </div>
      {["Filters on this page", "Filters on all pages"].map((t, i) => (
        <div key={t} className={`flex flex-col pl-[8.500px] pr-[9.500px] text-[11.850px] leading-[18px] ${i ? "pt-[28.500px]" : "pt-[17.500px]"}`}>
          <div className="flex items-center justify-between pr-[3px] text-[#444]">{t}<Dots className="mt-[4px] scale-x-75" /></div>
          <div className="mt-[8.500px] flex h-[48.500px] items-center justify-center rounded-[2px] border border-[#c6c6c6]">Add data fields here</div>
        </div>
      ))}
    </div>
  );
}

const PaneHead = ({ t }: { t: string }) => (
  <div className="flex h-[42px] items-center text-[15.300px] font-semibold text-[#333]">
    <span className="flex-1">{t}</span>
    <Dots className="mr-[10px]" />
    <Chevs c="#8a8a8a" />
  </div>
);

function FormatPane() {
  return (
    <div className="flex w-[192px] shrink-0 flex-col border-l border-[#e0dedd] bg-[#f2f1f0]">
      <div className="pl-[8px] pr-[8.500px]">
        <PaneHead t="Format" />
        <div className="mt-[2px] flex h-[28.500px] w-[174px] items-center gap-[5px] rounded-[2px] border border-[#858585] pl-[8px] text-[13.500px] text-[#555]"><Lens />Search</div>
      </div>
      <div className="mt-[13px] flex flex-col">
        {["Page information", "Canvas settings", "Canvas background", "Wallpaper", "Filter pane", "Filter cards"].map((t) => (
          <div key={t} className="flex h-[43.500px] items-center gap-[7px] border-b border-[#e1dfdd] pl-[10.500px] pt-px text-[12.050px] font-medium text-[#333]">
            <svg viewBox="0 0 8 13" className="-mt-[2px] h-[12px] w-[7px]"><path d="M1 1L7 6.500L1 12" fill="none" stroke="#555" strokeWidth="1.500" /></svg>{t}
          </div>
        ))}
      </div>
    </div>
  );
}

const visuals = ["stackedBar", "stackedCol", "clusteredBar2", "clusteredCol2", "bar100", "col100", "line", "area", "stackedArea", "area100", "comboStack", "comboClust", "ribbon", "waterfall", "funnel", "scatter", "pie", "donut", "treemap", "map", "filledMap", "shapeMap", "azure", "gauge", "card", "multiCard", "kpi", "slicer", "table", "matrix", "r", "py", "keyInf", "decomp", "qa", "narrative", "goals", "paginated", "boltCard", "boltSlicer", "arcgis", "powerApps", "automate", "more"];

function BuildPane() {
  return (
    <div className="flex w-[191px] shrink-0 flex-col border-l border-[#dcdad9] bg-[#f2f1f0] pl-[8px] pr-[8px] text-[11.850px] leading-[18px] text-[#444]">
      <PaneHead t="Build" />
      <div className="-mt-[2px]">Suggestions</div>
      <div className="mt-[3px] grid h-[226px] w-[174px] shrink-0 grid-cols-[repeat(6,20px)] content-start gap-x-[7.500px] gap-y-[8.450px] rounded-[2px] border border-[#979593] bg-white pl-[7px] pt-[7px]">
        {visuals.map((n) => <Glyph key={n} name={n} big />)}
      </div>
      <div className="mt-[9px] h-[21.500px] shrink-0">Data</div>
      <div className="h-[42px] w-[174px] shrink-0 border border-dashed border-[#555] p-[4px]">
        <div className="flex h-full items-center justify-center rounded-[2px] border border-[#666] bg-white pt-px text-[12.600px] text-[#333]">+Add data</div>
      </div>
    </div>
  );
}

function DataPane() {
  return (
    <div className="w-[32px] shrink-0 overflow-hidden border-l border-[#dcdad9] bg-[#f2f1f0]">
      <div className="w-[120px]">
        <div className="flex h-[42px] items-center pl-[9px] text-[15.300px] font-semibold text-[#333]">Data</div>
        <div className="ml-[5px] mt-[6px] flex h-[25px] items-center rounded-[4px] border border-b-2 border-[#dadada] border-b-[#8a8a8a] bg-white pl-[13px]">
          <svg viewBox="0 0 14 14" className="h-[14px] w-[14px]"><circle cx="6" cy="6" r="4.800" fill="none" stroke="#555" strokeWidth="1.300" /><path d="M9.500 9.500L13 13" stroke="#555" strokeWidth="1.400" /></svg>
        </div>
        <div className="flex items-center pl-[14px] pt-[17px]">
          <svg viewBox="0 0 14 8" className="h-[8px] w-[13px]"><path d="M1 1L7 7L13 1" fill="none" stroke="#777" strokeWidth="1.200" /></svg>
          <div className="ml-[3px] h-[11px] w-[10px] border border-[#777]" />
        </div>
      </div>
    </div>
  );
}

export default function App() {
  return (
    <div className="relative flex h-[958px] w-[1793px] flex-col overflow-hidden bg-white font-['Noto_Sans','Open_Sans',sans-serif]">
      <div className="h-[12px] shrink-0 bg-[#3b3a39]">
        <svg viewBox="0 0 1793 12" className="block h-[12px] w-[1793px]">
          <path d="M15 0Q14.500 2 12 3M44 0L47 3M847.500 0V2M1772 2Q1775 3.500 1777 0" fill="none" stroke="#b5b5b5" strokeWidth="1.300" />
        </svg>
      </div>
      <Ribbon />
      <div className="flex min-h-0 flex-1">
        <Report />
        <FiltersPane />
        <FormatPane />
        <BuildPane />
        <DataPane />
      </div>
      <svg viewBox="590 85 110 130" className="absolute left-[590px] top-[85px] z-20 h-[130px] w-[110px]">
        <circle cx="644.900" cy="140.200" r="49.500" fill="#7fdfc9" fillOpacity=".58" />
        <path d="M646.500 142.500L684.500 180.500Q685.500 182.500 682.500 182.700L670.500 184L677.500 199Q677.500 203.500 672.500 205Q668.500 206 667 203.500L658.500 187.500L646.500 196Q644 197.500 644 194.500V143.500Q644.500 141 646.500 142.500Z" fill="#f7f7f7" stroke="#111" strokeWidth="2.600" strokeLinejoin="round" />
      </svg>
    </div>
  );
}
